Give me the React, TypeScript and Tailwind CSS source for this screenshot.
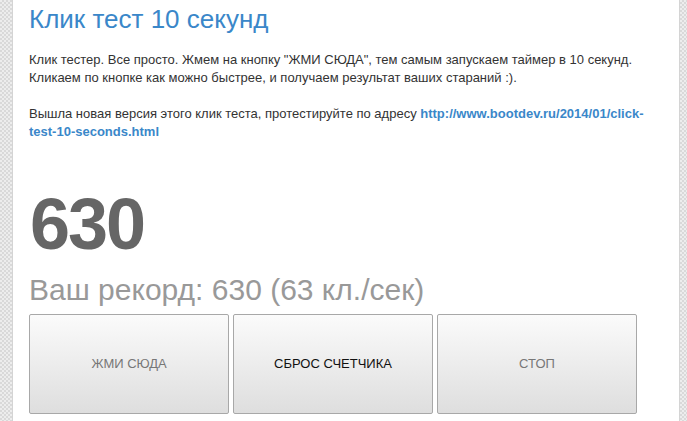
export default function App() {
  const buttons = [
    { label: "ЖМИ СЮДА", color: "text-[#777]" },
    { label: "СБРОС СЧЕТЧИКА", color: "text-[#111]" },
    { label: "СТОП", color: "text-[#777]" },
  ];

  return (
    <div
      className="flex h-[421px] w-[687px] overflow-hidden bg-white"
      style={{ fontFamily: '"Liberation Sans", Arial, sans-serif' }}
    >
      <div className="h-full w-[13px] shrink-0 border-r border-[#d4d4d4] bg-[repeating-conic-gradient(#d9d9d9_0_25%,#ededed_0_50%)] bg-[length:4px_4px]" />
      <div className="flex h-full w-[666px] shrink-0 flex-col pl-[16px] pr-[20px]">
        <h1 className="mt-[4px] text-[26px] leading-[30px] text-[#3a87c9]">
          Клик тест 10 секунд
        </h1>
        <p className="mt-[17px] text-[13px] leading-[18px] text-[#333]">
          Клик тестер. Все просто. Жмем на кнопку "ЖМИ СЮДА", тем самым
          запускаем таймер в 10 секунд. Кликаем по кнопке как можно быстрее, и
          получаем результат ваших стараний :).
        </p>
        <p className="mt-[18px] text-[13px] leading-[18px] text-[#333]">
          Вышла новая версия этого клик теста, протестируйте по адресу{" "}
          <a href="#" className="font-bold text-[#3a87c9]">
            http://www.bootdev.ru/2014/01/click-test-10-seconds.html
          </a>
        </p>
        <div className="mt-[40px] pl-[1px] text-[72px] font-bold leading-[86px] tracking-[-2px] text-[#666]">
          630
        </div>
        <div className="mt-[6px] text-[30px] leading-[34px] text-[#999]">
          Ваш рекорд: 630 (63 кл./сек)
        </div>
        <div className="mt-[7px] flex gap-[4px]">
          {buttons.map((b) => (
            <button
              key={b.label}
              className={`h-[100px] w-[200px] rounded-[2px] border border-[#a8a8a8] bg-gradient-to-b from-[#fbfbfb] to-[#dedede] text-[13px] ${b.color}`}
            >
              {b.label}
            </button>
          ))}
        </div>
      </div>
      <div className="h-full flex-1 border-l border-[#d4d4d4] bg-[repeating-conic-gradient(#d9d9d9_0_25%,#ededed_0_50%)] bg-[length:4px_4px]" />
    </div>
  );
}
